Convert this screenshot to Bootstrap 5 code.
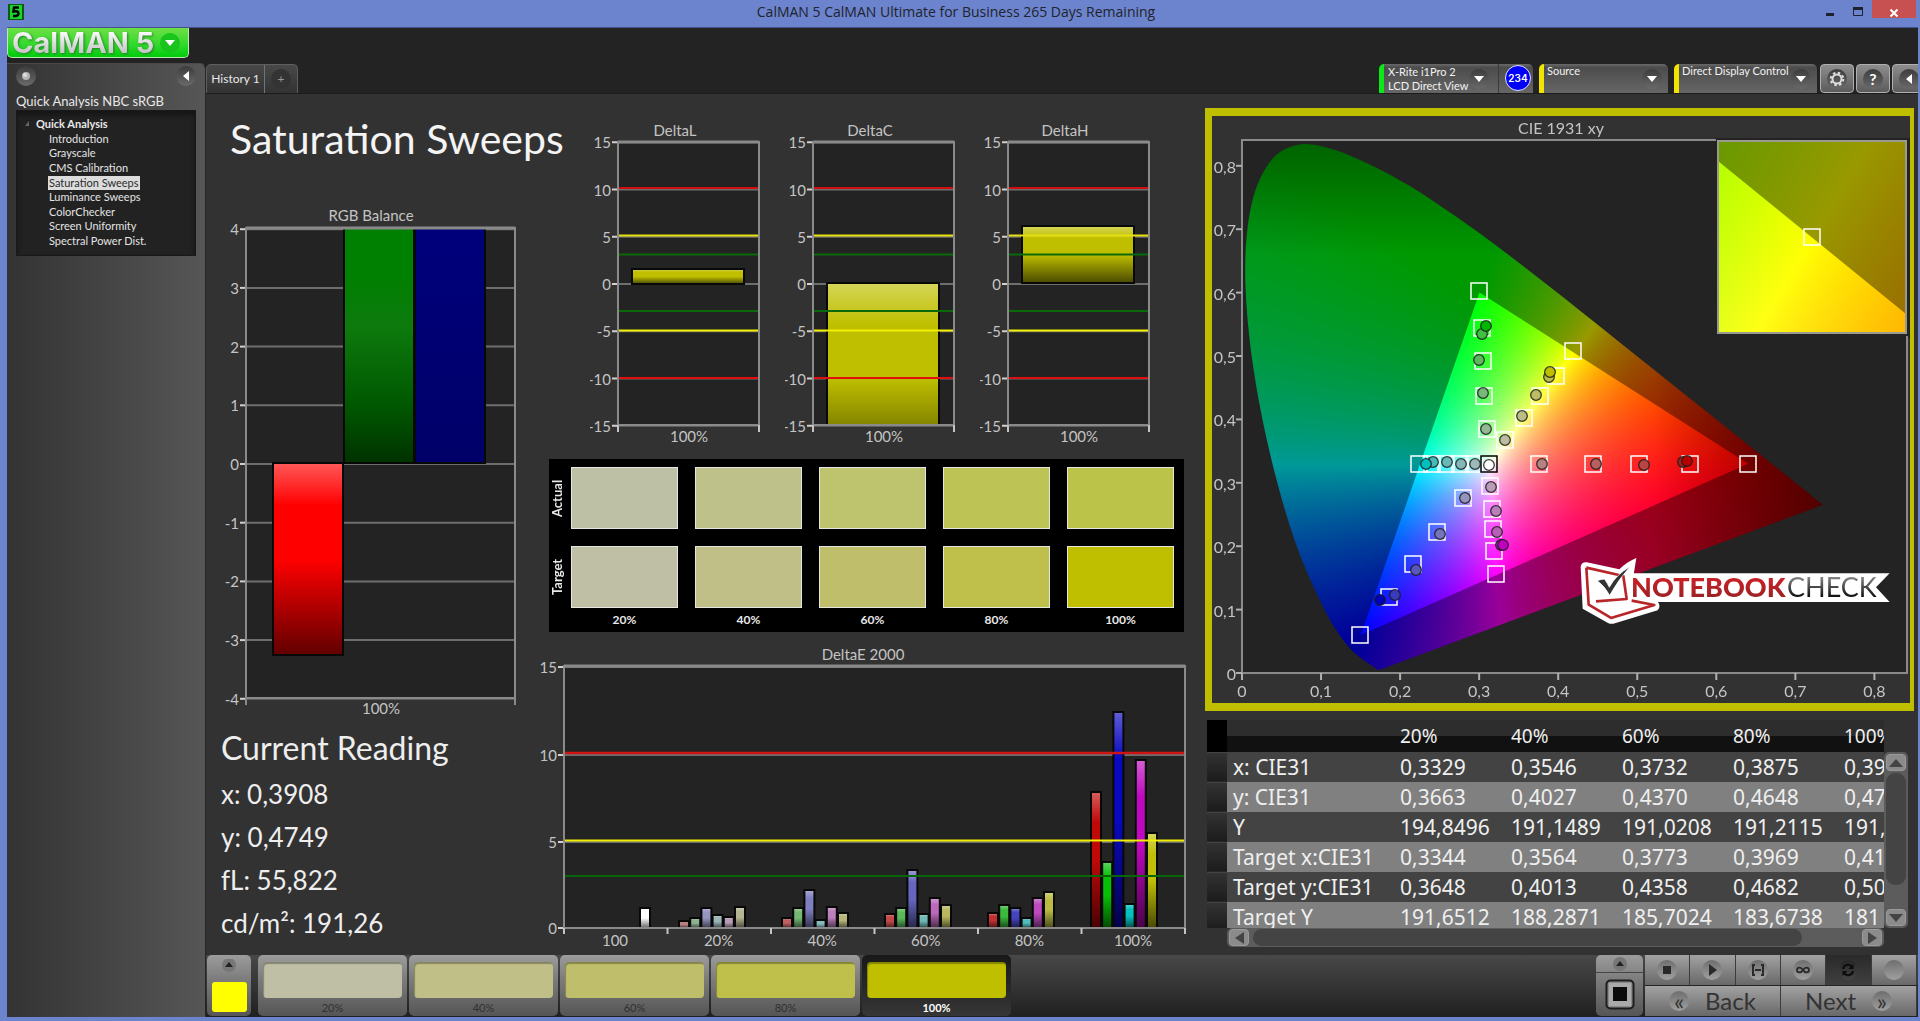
<!DOCTYPE html>
<html lang="en">
<head>
<meta charset="utf-8">
<meta name="viewport" content="width=device-width, initial-scale=1">
<title>CalMAN 5</title>
<link rel="stylesheet" href="https://cdn.jsdelivr.net/npm/bootstrap@5.3.0/dist/css/bootstrap.min.css">
<style>
:root{--blue:#6c83cd;--dark:#232323;--panel:#323232;--line:#8a8a8a}
body{background:var(--blue);color:#e8e8e8;font-family:Lato,"Open Sans",sans-serif;font-size:12px;line-height:14px;overflow:hidden}
button{font-family:inherit;color:inherit;border:0;padding:0;background:none}
svg text{font-family:Lato,"Open Sans",sans-serif}
.titlebar{height:27px;color:#20242c;font-family:"Open Sans",sans-serif;font-size:14px;line-height:24px}
.winbtn{width:28px;height:18px;color:#1d2130}
.closebtn{width:44px;height:18px;background:#c75050;color:#fff}
.app-shell{margin:0 2px 4px 7px;background:var(--dark);border-top:1px solid #42528c}
.topbar{height:65px}
.logo{width:182px;height:30px;background:linear-gradient(#6fdf45,#2fd82b 60%,#00cc0a);border:1px solid #b9e8b4;border-top:0;border-radius:0 0 5px 5px;overflow:hidden}
.logo-name{font-family:Inter,sans-serif;font-weight:700;font-size:29px;line-height:26px;background:linear-gradient(#fff,#bdbdbd);-webkit-background-clip:text;background-clip:text;color:transparent;filter:drop-shadow(1px 1px 1px #26802a)}
.side{width:199px;background:linear-gradient(90deg,#333,#565656);border-top:1px solid #4a4a4a;border-right:1px solid #262626;border-top-right-radius:6px;margin-top:-30px;padding:2px 9px 0}
.disc{width:20px;height:20px;border-radius:50%;background:linear-gradient(#3c3c3c,#6a6a6a);display:inline-flex;align-items:center;justify-content:center;flex:none}
.disc-green{background:#19c41d}
.disc-dark{background:#333;color:#999}
.flow-name{font-size:13px;line-height:18px;margin:6px 0 0}
.tree{background:#222;border:1px solid #191919;box-shadow:inset 0 4px 5px #151515;height:146px;padding:6px 0 0 8px;font-size:11px}
.tree ul{height:131px}
.tree a{color:#e4e4e4;text-decoration:none;line-height:14px;padding:0 1px;display:inline-block}
.tree a.current{background:#dcdcdc;color:#2b2b2b}
.tree li{padding-left:23px;line-height:14px}
.tree .branch{padding-left:0}
.tabs{border:1px solid #5e5e5e;border-bottom:0;border-radius:5px 5px 0 0;background:linear-gradient(#484848,#333);height:29px;margin-left:17px}
.tabs button{height:28px}
.tool{height:29px;background:linear-gradient(#6a6a6a,#4c4c4c 12%,#666);border-left:5px solid #f0e400;border-radius:5px 5px 0 0;color:#f2f2f2;position:relative;font-size:11px}
.tool select{appearance:none;background:none;border:0;color:inherit;font-size:11px;line-height:14px;width:100%;height:29px;padding:0 3px 15px;display:block}
.tool .disc{position:absolute;right:6px;top:5px;pointer-events:none}
.meter{border-left-color:#0bea16}
.meter .disc{right:44px}
.count{width:26px;height:26px;border-radius:50%;background:#0000f8;border:1px solid #dfe3ff;color:#fff;font:600 10px/24px Inter,sans-serif;text-align:center;margin:1px 2px 0 auto}
.sq{width:34px;height:29px;border:1px solid #b0b0b0;border-radius:4px;background:linear-gradient(#8d8d8d,#5c5c5c);display:inline-flex;align-items:center;justify-content:center}
.board{background:var(--panel);border-top:1px solid #1c1c1c}
.colL{flex:334 1 0;min-width:0}
.colM{flex:660 1 0;min-width:0}
.colR{flex:709 1 0;min-width:0;padding:14px 4px 0 5px}
.page-title{font-size:41px;line-height:48px;color:#f4f4f4;white-space:nowrap;padding:21px 0 0 24px;height:111px;margin:0;font-weight:400}
.chart{display:block;width:100%;height:auto}
.reading{padding:8px 0 0 15px;color:#eee}
.reading h2{font-size:32px;line-height:40px;margin:0 0 5px;font-weight:400}
.reading p{font-size:26px;line-height:43px;margin:0}
.delta-row{padding:21px 25px 0 50px}
.patches{background:#000;margin:9px 16px 8px 9px;padding:8px 10px 0 0;color:#e8e8e8;height:173px}
.patch-line{margin-bottom:17px}
.patch-line:last-child{margin-top:-13px}
.patch-row{display:grid;grid-template-columns:repeat(5,1fr);column-gap:17px}
.side-name{writing-mode:vertical-rl;transform:rotate(180deg);font-weight:700;font-size:13px;line-height:16px;text-align:center;width:16px;margin-right:6px;flex:none}
.patch{border:1px solid #e6e6e0;height:62px}
.cap{text-align:center;font-size:12px;font-weight:700;line-height:16px}
.cie{border:solid #bfbf00;border-width:8px 4px 8px 7px;position:relative}
.cie canvas{display:block;width:100%;height:auto}
.cie svg{position:absolute;inset:0;width:100%;height:100%}
.grid-wrap{margin:9px 6px 0 2px}
.grid-head{height:208px;overflow:hidden;min-width:0}
.readout{font-family:"Noto Sans",sans-serif;font-size:21px;table-layout:fixed;width:748px;border-collapse:collapse;color:#efefef;white-space:nowrap}
.readout th,.readout td{padding:0;font-weight:400;height:30px;line-height:30px;overflow:hidden;width:111px}
.readout tbody tr{background:#434343}
.readout tbody tr:nth-child(even){background:#808080}
.readout thead tr{background:linear-gradient(#2d2d2d 50%,#111 50%)}
.readout thead th{height:32px;font-size:19px}
.readout tr>:first-child{width:20px;background:linear-gradient(#333,#1b1b1b);border-bottom:1px solid #444}
.readout thead tr>:first-child{background:#000}
.readout tr>:nth-child(2){width:173px;padding-left:6px;text-align:left;box-sizing:border-box}
.vbar{width:24px;height:176px;margin-top:32px;background:#5c5c5c;border-radius:5px;padding:2px}
.vbar .thumb{height:112px;margin:2px 0 auto}
.vbar .arrowbtn{height:17px}
.hbar{height:19px;margin:0 24px 0 20px;background:#5c5c5c;border-radius:5px;padding:1px 2px}
.hbar .thumb{width:84%;margin:0 auto 0 4px}
.hbar .arrowbtn{width:20px}
.arrowbtn{background:#8b8b8b;border:1px solid #9a9a9a;border-radius:4px;display:flex;align-items:center;justify-content:center;flex:none}
.thumb{background:#444;border-radius:9px}
.bottombar{height:62px;background:linear-gradient(#484848,#202020);padding-right:1px}
.metal{background:linear-gradient(#9c9c9c,#7c7c7c 40%,#555);border-radius:5px}
.pick{width:44px;height:61px;margin:0 7px 0 1px}
.pick i{display:block;width:35px;height:30px;background:#ff0;border-radius:3px}
.level{width:149px;height:61px;padding:5px 5px 0;color:#303030;font-size:11px}
.level i{display:block;height:36px;border-radius:4px;margin-bottom:3px;box-shadow:inset 1px 2px 1px rgba(0,0,0,.3)}
.level.active{background:linear-gradient(#191919,#363636);color:#fff;font-weight:700}
.ctl{height:30px;border-right:1px solid #3c3c3c;background:linear-gradient(#a2a2a2,#686868);color:#2a2a2a}
.ctl .disc{background:linear-gradient(#6e6e6e,#a0a0a0)}
.ctl.on{background:linear-gradient(#2a2a2a,#404040)}
.ctl.on .disc{background:linear-gradient(#262626,#444)}
.nav-big{font-size:24px;line-height:30px;color:#333}
.transport{width:272px}
.stackbox{width:47px;height:61px}
.stackbox button:first-child{height:18px;border-bottom:1px solid #444}
.gap-thin{gap:2px}
</style>
<script src="https://cdn.jsdelivr.net/npm/bootstrap@5.3.0/dist/js/bootstrap.bundle.min.js"></script>
</head>
<body class="vh-100 d-flex flex-column">

<header class="titlebar d-flex align-items-start">
  <svg width="16" height="16" viewBox="0 0 16 16" class="ms-2 mt-1"><rect width="16" height="16" fill="#0a5a12"/><rect x="2" y="1" width="12" height="14" fill="#19d62a"/><path d="M11 3.5H6L5.500 7.500Q10.500 6.500 10.500 9.500T5 12" fill="none" stroke="#000" stroke-width="2.500"/></svg>
  <div class="flex-fill text-center ps-5 ms-4">CalMAN 5 CalMAN Ultimate for Business 265 Days Remaining</div>
  <button class="winbtn" aria-label="Minimize"><svg width="10" height="12" viewBox="0 0 10 12"><path d="M1 7.500h8" stroke="currentColor" stroke-width="3"/></svg></button>
  <button class="winbtn" aria-label="Maximize"><svg width="12" height="12" viewBox="0 0 12 12"><path d="M1.500 1v7.500h9V1" fill="none" stroke="currentColor"/><path d="M1 1.500h10" stroke="currentColor" stroke-width="3"/></svg></button>
  <button class="closebtn" aria-label="Close"><svg width="10" height="10" viewBox="0 0 10 10"><path d="M1.500 1.500l7 7m0-7l-7 7" stroke="currentColor" stroke-width="2"/></svg></button>
  <span class="ps-1"></span>
</header>

<div class="app-shell flex-fill d-flex flex-column">
  <div class="topbar d-flex align-items-start">
    <button class="logo d-flex align-items-center" aria-label="CalMAN menu">
      <span class="logo-name ps-1 flex-fill text-start text-nowrap">CalMAN 5</span>
      <span class="disc disc-green me-2"><svg width="10" height="6" viewBox="0 0 10 6"><path d="M0 0h10L5 6z" fill="#fff"/></svg></span>
    </button>
    <div class="tabs d-flex align-self-end">
      <button class="px-1" style="width:57px">History 1</button>
      <button class="border-start border-secondary" style="width:33px" aria-label="Add history"><span class="disc disc-dark">+</span></button>
    </div>
    <div class="ms-auto align-self-end d-flex align-items-end">
      <div class="tool meter d-flex" style="width:154px">
        <button class="text-start ps-1 text-nowrap" style="width:115px;border-right:1px solid #3a3a3a">X-Rite i1Pro 2<br>LCD Direct View</button>
        <span class="disc"><svg width="10" height="6" viewBox="0 0 10 6"><path d="M0 0h10L5 6z" fill="#fff"/></svg></span>
        <span class="count">234</span>
      </div>
      <div class="tool" style="width:129px;margin-left:6px">
        <select aria-label="Source"><option>Source</option></select>
        <span class="disc"><svg width="10" height="6" viewBox="0 0 10 6"><path d="M0 0h10L5 6z" fill="#fff"/></svg></span>
      </div>
      <div class="tool" style="width:143px;margin:0 3px 0 6px">
        <select aria-label="Display control"><option>Direct Display Control</option></select>
        <span class="disc"><svg width="10" height="6" viewBox="0 0 10 6"><path d="M0 0h10L5 6z" fill="#fff"/></svg></span>
      </div>
      <div class="d-flex overflow-hidden align-self-start gap-thin" style="width:98px">
        <button class="sq flex-shrink-0" aria-label="Settings"><span class="disc"><svg width="16" height="16" viewBox="-8 -8 16 16"><circle r="4.500" fill="none" stroke="#ddd" stroke-width="2"/><circle r="6.300" fill="none" stroke="#ddd" stroke-width="2" stroke-dasharray="2.500 2.448"/></svg></span></button>
        <button class="sq flex-shrink-0" aria-label="Help"><span class="disc fw-bold text-white fs-6">?</span></button>
        <button class="sq flex-shrink-0" aria-label="Collapse"><span class="disc"><svg width="6" height="10" viewBox="0 0 6 10"><path d="M6 0v10L0 5z" fill="#fff"/></svg></span></button>
      </div>
    </div>
  </div>

  <div class="d-flex flex-fill">
    <aside class="side flex-shrink-0">
      <div class="d-flex justify-content-between">
        <button class="disc" aria-label="Workflow options"><svg width="10" height="10" viewBox="0 0 10 10"><circle cx="5" cy="5" r="4" fill="#b5b5b5"/><circle cx="4" cy="4" r="2" fill="#ddd"/></svg></button>
        <button class="disc" aria-label="Collapse sidebar"><svg width="6" height="10" viewBox="0 0 6 10"><path d="M6 0v10L0 5z" fill="#fff"/></svg></button>
      </div>
      <div class="flow-name">Quick Analysis NBC sRGB</div>
      <nav class="tree">
        <ul class="list-unstyled m-0 d-flex flex-column justify-content-between">
          <li class="branch fw-bold d-flex align-items-center"><svg width="11" height="6" viewBox="0 0 11 6"><path d="M4 0v5H0z" fill="#666"/></svg>Quick Analysis</li>
          <li><a href="#">Introduction</a></li>
          <li><a href="#">Grayscale</a></li>
          <li><a href="#">CMS Calibration</a></li>
          <li><a href="#" class="current">Saturation Sweeps</a></li>
          <li><a href="#">Luminance Sweeps</a></li>
          <li><a href="#">ColorChecker</a></li>
          <li><a href="#">Screen Uniformity</a></li>
          <li><a href="#">Spectral Power Dist.</a></li>
        </ul>
      </nav>
    </aside>

    <div class="flex-fill d-flex flex-column" style="min-width:0">
      <main class="board flex-fill d-flex">
        <section class="colL">
          <h1 class="page-title">Saturation Sweeps</h1>
          <svg class="chart" id="rgb" viewBox="206 205 334 515"></svg>
          <div class="reading">
            <h2>Current Reading</h2>
            <p>x: 0,3908</p><p>y: 0,4749</p><p>fL: 55,822</p><p>cd/m²: 191,26</p>
          </div>
        </section>

        <section class="colM">
          <div class="delta-row d-flex">
            <svg class="chart" id="dL" viewBox="590 115 195 335"></svg>
            <svg class="chart" id="dC" viewBox="590 115 195 335"></svg>
            <svg class="chart" id="dH" viewBox="590 115 195 335"></svg>
          </div>
          <div class="patches" id="patches"></div>
          <svg class="chart" id="dE" viewBox="540 640 660 312"></svg>
        </section>

        <section class="colR">
          <div class="cie"><canvas id="gamut" width="698" height="587"></canvas><svg id="cie" viewBox="1212 116 698 587"></svg></div>
          <div class="grid-wrap">
            <div class="d-flex">
              <div class="grid-head flex-fill"><table class="readout" id="readout"></table></div>
              <div class="vbar d-flex flex-column flex-shrink-0">
                <button class="arrowbtn w-100" aria-label="Scroll up"><svg width="14" height="8" viewBox="0 0 14 8"><path d="M7 0l7 8H0z" fill="#444"/></svg></button>
                <div class="thumb"></div>
                <button class="arrowbtn w-100" aria-label="Scroll down"><svg width="14" height="8" viewBox="0 0 14 8"><path d="M7 8l7-8H0z" fill="#444"/></svg></button>
              </div>
            </div>
            <div class="hbar d-flex">
              <button class="arrowbtn" aria-label="Scroll left"><svg width="9" height="12" viewBox="0 0 9 12"><path d="M9 0v12L0 6z" fill="#444"/></svg></button>
              <div class="thumb"></div>
              <button class="arrowbtn" aria-label="Scroll right"><svg width="9" height="12" viewBox="0 0 9 12"><path d="M0 0v12l9-6z" fill="#444"/></svg></button>
            </div>
          </div>
        </section>
      </main>

      <footer class="bottombar d-flex align-items-start">
        <button class="metal pick d-flex flex-column align-items-center justify-content-between py-1" aria-label="Choose pattern colour">
          <svg width="16" height="14" viewBox="0 0 16 14"><circle cx="8" cy="6" r="7" fill="#777"/><path d="M8 3l4 5H4z" fill="#222"/></svg>
          <i></i>
        </button>
        <div class="d-flex gap-thin" id="levels"></div>
        <div class="ms-auto d-flex gap-thin">
          <div class="metal stackbox d-flex flex-column align-items-center">
            <button class="w-100" aria-label="More patterns"><svg class="d-block m-auto" width="16" height="14" viewBox="0 0 16 14"><circle cx="8" cy="7" r="7" fill="#777"/><path d="M8 4l4 5H4z" fill="#222"/></svg></button>
            <button class="m-auto" aria-label="Pattern window"><svg class="d-block" width="30" height="31" viewBox="0 0 30 31"><rect x="1.500" y="1.500" width="27" height="28" rx="4" fill="#8a8a8a" stroke="#1c1c1c" stroke-width="2"/><rect x="4" y="4" width="22" height="23" fill="#aaa"/><rect x="8" y="8" width="14" height="14" fill="#0c0c0c"/></svg></button>
          </div>
          <div class="transport">
            <div class="row g-0 row-cols-6" id="transport"></div>
            <div class="row g-0 row-cols-2 border-top border-dark">
              <button class="col ctl nav-big d-flex align-items-center justify-content-center"><span class="disc me-3">«</span>Back</button>
              <button class="col ctl nav-big d-flex align-items-center justify-content-center">Next<span class="disc ms-3">»</span></button>
            </div>
          </div>
        </div>
      </footer>
    </div>
  </div>
</div>

<script>
const $ = id => document.getElementById(id);
const LINE = '#8a8a8a', TXT = '#c4c4c4';
const line = (x1,y1,x2,y2,c,w) => `<line x1="${x1}" y1="${y1}" x2="${x2}" y2="${y2}" stroke="${c}" stroke-width="${w}"/>`;
const label = (x,y,t,a='middle',s=15) => `<text x="${x}" y="${y}" fill="${TXT}" font-size="${s}" text-anchor="${a}">${t}</text>`;
const shine = id => `<defs><linearGradient id="${id}" x1="0" y1="0" x2="0" y2="1"><stop offset="0" stop-color="#fff" stop-opacity=".35"/><stop offset=".22" stop-color="#fff" stop-opacity="0"/><stop offset=".5" stop-color="#000" stop-opacity="0"/><stop offset="1" stop-color="#000" stop-opacity=".62"/></linearGradient></defs>`;
const bar = (x,y,w,h,c,g) => `<rect x="${x}" y="${y}" width="${w}" height="${h}" fill="${c}"/><rect x="${x}" y="${y}" width="${w}" height="${h}" fill="url(#${g})" stroke="#080808" stroke-width="2"/>`;
function frame(x,y,w,h,grid){
  let s = `<rect x="${x}" y="${y}" width="${w}" height="${h}" fill="#232323"/>`;
  grid.forEach(([v,gy]) => s += line(x-6,gy,x,gy,'#d0d0d0',2) + line(x,gy,x+w,gy,'#6e6e6e',2) + label(x-7,gy+6,v,'end'));
  return s;
}
const border = (x,y,w,h) => `<rect x="${x}" y="${y}" width="${w}" height="${h}" fill="none" stroke="${LINE}" stroke-width="2"/>`+line(x,y,x+w,y,LINE,3);

/* RGB balance */
{
  const g = [4,3,2,1,0,-1,-2,-3,-4].map(v => [v, 464 - v*58.7]);
  $('rgb').innerHTML = shine('gr') + `<defs><linearGradient id="gg" x1="0" y1="0" x2="0" y2="1"><stop offset=".2" stop-color="#008000"/><stop offset=".42" stop-color="#0d7a0d"/><stop offset=".75" stop-color="#005800"/><stop offset="1" stop-color="#003200"/></linearGradient><linearGradient id="gb" x1="0" y1="0" x2="0" y2="1"><stop offset="0" stop-color="#00007c"/><stop offset="1" stop-color="#000068"/></linearGradient></defs>`
   + label(371,221,'RGB Balance') + frame(246,228,269,470,g)
   + bar(273,463,70,192,'#f00','gr') + `<rect x="344" y="228" width="70" height="235" fill="url(#gg)" stroke="#080808" stroke-width="2"/><rect x="415" y="228" width="70" height="235" fill="url(#gb)" stroke="#080808" stroke-width="2"/>`
   + border(246,228,269,470) + line(246,698,246,705,LINE,2) + line(515,698,515,705,LINE,2) + label(381,714,'100%');
}
/* DeltaL, DeltaC, DeltaH */
[['dL','DeltaL',269,15],['dC','DeltaC',283,190],['dH','DeltaH',226,57]].forEach(([id,name,y,h]) => {
  const g = [15,10,5,0,-5,-10,-15].map(v => [v, 284 - v*9.45]);
  let s = shine('g'+id) + `<defs><clipPath id="c${id}"><rect x="618" y="141" width="141" height="284"/></clipPath></defs>` + label(675,136,name) + frame(618,142,141,283,g)
   + `<g clip-path="url(#c${id})">${bar(632,y,112,h,'#bfbf00','g'+id)}</g>`;
  [[188,'#d01010'],[235.5,'#e8e010'],[254.5,'#0a6a0a'],[311,'#0a6a0a'],[330.5,'#f0f000'],[378,'#e01010']].forEach(([ly,c]) => s += line(618,ly,759,ly,c,2));
  $(id).innerHTML = s + border(618,142,141,283) + line(618,425,618,432,'#c4c4c4',2) + line(759,425,759,432,'#c4c4c4',2) + label(689,442,'100%');
});
/* Actual and target patches */
{
  const rows = {Actual:['#bdc0a5','#bec189','#bec36d','#bdc455','#bbc448'],Target:['#bfbfa5','#c0bf87','#bfbf6b','#bfc04b','#bfbf00']};
  const row = (n,cells) => `<div class="patch-line d-flex"><div class="side-name">${n}</div><div class="patch-row flex-fill">${cells}</div></div>`;
  $('patches').innerHTML = Object.entries(rows).map(([n,cs]) => row(n, cs.map(c => `<div class="patch" style="background:${c}"></div>`).join(''))).join('')
   + row('', [20,40,60,80,100].map(v => `<div class="cap">${v}%</div>`).join(''));
}
/* DeltaE 2000 */
{
  let s = shine('ge') + label(863,660,'DeltaE 2000') + frame(564,666,621,262,[[15,667],[10,755],[5,842],[0,928]]);
  const sets = [
   [640,[908],['#fff']],
   [679,[921,918,908,915,917,907],['#b98080','#8db391','#9595c0','#9bb5b8','#b79cb8','#b5b594']],
   [782,[918,908,890,920,907,913],['#c06060','#74b874','#7e7ec0','#86b8b8','#bb7fbb','#b5b57a']],
   [885,[914,908,870,914,898,905],['#c04a4a','#5aba5a','#6666c0','#70b8b8','#bb6abb','#b8b85f']],
   [988,[913,905,908,918,898,892],['#c03030','#3cba3c','#4444bf','#50bcbc','#bc4abc','#bbbb44']],
   [1091,[792,862,712,904,760,833],['#bf0808','#08bf08','#0808bf','#08bfbf','#bf08bf','#bfbf08']]];
  sets.forEach(([x,t,c]) => t.forEach((y,i) => s += bar(x+i*11.2,y,10,928-y,c[i],'ge')));
  s += line(564,753,1185,753,'#d01414',2.5) + line(564,840.5,1185,840.5,'#f0f000',2) + line(564,876,1185,876,'#0a640a',2) + border(564,666,621,262);
  for (let i=0;i<7;i++) s += line(564+i*103.5,928,564+i*103.5,934,'#c4c4c4',2);
  ['100','20%','40%','60%','80%','100%'].forEach((t,i) => s += label(615+i*103.6,946,t));
  $('dE').innerHTML = s;
}
/* Chromaticity colours: linear RGB, scaled so that the strongest channel is full */
const px = x => 1242.3 - 1212 + x*790.5, py = y => 673 - 116 - y*634;
function shade(x,y){
  y = Math.max(y,.0005);
  const X = x/y, Z = (1-x-y)/y;
  let r = 3.2406*X-1.5372-.4986*Z, g = -.9689*X+1.8758+.0415*Z, b = .0557*X-.204+1.057*Z;
  r = Math.max(r,0); g = Math.max(g,0); b = Math.max(b,0);
  const m = Math.max(r,g,b) || 1;
  let d = 1;
  if (x > .52) d = 1-(x-.52)*2.2;
  if (y > .66) d = 1-(y-.66)*2;
  return [r/m*255*d, g/m*255*d, b/m*255*d];
}
function fillImage(w,h,toXY){
  const c = document.createElement('canvas'); c.width = w; c.height = h;
  const k = c.getContext('2d'), im = k.createImageData(w,h);
  for (let j=0;j<h;j++) for (let i=0;i<w;i++){ const [x,y] = toXY(i,j), p = shade(x,y), o = (j*w+i)*4; im.data[o]=p[0]; im.data[o+1]=p[1]; im.data[o+2]=p[2]; im.data[o+3]=255; }
  k.putImageData(im,0,0); return c;
}
const locus = [[.1741,.005],[.1714,.0051],[.1644,.0109],[.1566,.0177],[.144,.0297],[.1355,.0399],[.1241,.0578],[.1096,.0868],[.0913,.1327],[.0687,.2007],[.0454,.295],[.0235,.4127],[.0082,.5384],[.0039,.6548],[.0139,.7502],[.0389,.812],[.0743,.8338],[.1142,.8262],[.1547,.8059],[.1929,.7816],[.2296,.7543],[.3016,.6923],[.3731,.6245],[.4441,.5547],[.5125,.4866],[.5752,.4242],[.627,.3725],[.6658,.334],[.6915,.3083],[.719,.2809],[.7347,.2653]].map(([x,y]) => [px(x),py(y)]);
{
  const g = fillImage(698,587,(i,j) => [(i-30.3)/790.5,(557-j)/634]), k = g.getContext('2d');
  const tri = [[.64,.33],[.3,.6],[.15,.06]];
  k.beginPath(); k.rect(0,0,698,587); tri.forEach(([x,y],i) => k[i?'lineTo':'moveTo'](px(x),py(y))); k.closePath();
  k.fillStyle = 'rgba(0,0,0,.4)'; k.fill('evenodd');
  k.globalCompositeOperation = 'destination-in'; k.fillStyle = '#000';
  k.beginPath(); k.moveTo(...locus[0]);
  for (let i=0;i<locus.length-1;i++){
    const a = locus[Math.max(i-1,0)], b = locus[i], c = locus[i+1], d = locus[Math.min(i+2,locus.length-1)];
    k.bezierCurveTo(b[0]+(c[0]-a[0])/6,b[1]+(c[1]-a[1])/6,c[0]-(d[0]-b[0])/6,c[1]-(d[1]-b[1])/6,c[0],c[1]);
  }
  k.closePath(); k.fill();
  const m = $('gamut').getContext('2d');
  m.fillStyle = '#323232'; m.fillRect(0,0,698,587);
  m.fillStyle = '#232323'; m.fillRect(30,24,665,533);
  m.drawImage(g,0,0);
  /* magnified view around the 100% yellow target */
  const z = fillImage(188,192,(i,j) => [.4193+(i-94)*.05/188,.505-(j-97)*.05/192]), q = z.getContext('2d');
  q.beginPath(); q.moveTo(0,20); q.lineTo(188,173); q.lineTo(188,0); q.lineTo(0,0); q.fillStyle = 'rgba(0,0,0,.4)'; q.fill();
  m.fillStyle = '#232323'; m.fillRect(503,22,195,200);
  m.drawImage(z,506,25);
}
{
  let s = label(1561,134,'CIE 1931 xy','middle',16)
   + `<path d="M1716 140H1242V673H1907V336" fill="none" stroke="${LINE}" stroke-width="2"/><rect x="1718" y="141" width="188" height="192" fill="none" stroke="#9a9a90" stroke-width="2"/>`;
  for (let i=0;i<9;i++){
    const t = i ? '0,'+i : '0', x = 1242+i*79.05, y = 673-i*63.4;
    s += line(x,673,x,680,'#b0b0b0',2) + line(1236,y,1242,y,'#b0b0b0',2) + label(x,697,t,'middle',16) + label(1236,y+7,t,'end',16);
  }
  const sq = (x,y,c='#fff') => `<rect x="${x-8}" y="${y-8}" width="16" height="16" fill="none" stroke="${c}" stroke-width="1.5"/>`;
  [[1479,291],[1482,328],[1483,361],[1484,396],[1487,429],[1573,351],[1556,376],[1540,396],[1524,418],[1505,440],[1539,464],[1593,464],[1639,464],[1690,464],[1748,464],[1419,464],[1432,464],[1446,464],[1460,464],[1474,464],[1490,486],[1492,509],[1493,529],[1494,551],[1496,574],[1463,498],[1437,532],[1413,564],[1389,597],[1360,635],[1812,237]].forEach(p => s += sq(...p));
  s += sq(1489,464,'#000');
  [[1482,334,'#40bf40'],[1486,326,'#00b800'],[1479,360,'#5cb85c'],[1483,393,'#78b878'],[1486,429,'#94b894'],
   [1549,377,'#bdbd4a'],[1550,372,'#bfbf00'],[1536,395,'#bdbd68'],[1522,416,'#bcbc85'],[1505,440,'#bcbca2'],
   [1542,464,'#b88080'],[1596,464,'#b86060'],[1644,465,'#b84444'],[1683,462,'#a02020'],[1687,461,'#b80000'],
   [1433,462,'#46b8b8'],[1426,464,'#00bfbf'],[1447,462,'#68b8b8'],[1461,464,'#84b8b8'],[1475,464,'#9cb8b8'],
   [1491,487,'#b89cb8'],[1496,511,'#b87fb8'],[1497,532,'#b860b8'],[1501,545,'#b030b0'],[1503,545,'#c000c0'],
   [1465,498,'#9494bc'],[1440,534,'#7474bc'],[1416,570,'#5858bc'],[1395,595,'#3a3abc'],[1380,600,'#0000b8'],[1489,465,'#fff']]
   .forEach(([x,y,c]) => s += `<circle cx="${x}" cy="${y}" r="5.3" fill="${c}" stroke="#1c1c1c" stroke-opacity=".85" stroke-width="1.3"/>`);
  /* sponsor badge */
  s += `<defs><linearGradient id="ck" x1="0" y1="0" x2="0" y2="1"><stop offset=".2" stop-color="#888"/><stop offset=".8" stop-color="#111"/></linearGradient><linearGradient id="nb" x1="0" y1="0" x2="0" y2="1"><stop offset=".2" stop-color="#cf2026"/><stop offset=".8" stop-color="#9e2225"/></linearGradient></defs>
  <g transform="translate(1560 300) scale(.3333)">
   <path d="M150 820H989L948 862L989 906H150Z" fill="#fff"/>
   <path d="M62 800Q64 786 80 787L178 808Q200 786 229 774L220 830V900L290 903Q306 915 293 931L160 971Q152 973 144 969L68 926Z" fill="#fff"/>
   <path d="M79 803L190 828L200 897L108 904M79 803L86 914L153 954L283 915L215 902" fill="none" stroke="#b8262a" stroke-width="8" stroke-linejoin="round"/>
   <path d="M112 842Q128 836 134 838Q142 850 148 862Q168 824 210 800Q174 840 149 886Q134 858 112 842Z" fill="#333" stroke="#fff" stroke-width="2"/>
  </g>
  <text x="1631" y="597" font-size="27" font-weight="900" fill="url(#nb)">NOTEBOOK</text><text x="1787" y="597" font-size="27" fill="url(#ck)">CHECK</text>`;
  $('cie').innerHTML = s;
}
/* Readings table */
{
  const rows = [['x: CIE31','0,3329','0,3546','0,3732','0,3875','0,3908'],['y: CIE31','0,3663','0,4027','0,4370','0,4648','0,4749'],['Y','194,8496','191,1489','191,0208','191,2115','191,26'],['Target x:CIE31','0,3344','0,3564','0,3773','0,3969','0,4193'],['Target y:CIE31','0,3648','0,4013','0,4358','0,4682','0,5053'],['Target Y','191,6512','188,2871','185,7024','183,6738','181']];
  $('readout').innerHTML = '<thead><tr><th></th><th></th>' + [20,40,60,80,100].map(v => `<th>${v}%</th>`).join('') + '</tr></thead><tbody>'
   + rows.map(r => '<tr><td></td>' + r.map(c => `<td>${c}</td>`).join('') + '</tr>').join('') + '</tbody>';
}
/* Saturation levels and transport */
$('levels').innerHTML = [['20%','#bfbfa5'],['40%','#c0bf87'],['60%','#bfbf6b'],['80%','#bfc04b'],['100%','#bfbf00']].map(([t,c],i) => `<button class="metal level${i==4?' active':''}"><i style="background:${c}"></i>${t}</button>`).join('');
$('transport').innerHTML = [
 ['Stop','<rect x="4" y="4" width="8" height="8" fill="#2a2a2a"/>'],
 ['Play','<path d="M5 2l8 6-8 6z" fill="#2a2a2a"/>'],
 ['Read series','<path d="M5 3H3v10h2M11 3h2v10h-2M5 8h6" fill="none" stroke="#2a2a2a" stroke-width="2" stroke-dasharray="20"/>'],
 ['Continuous','<path d="M8 8C6 4.500 2 5 2 8s4 3.500 6 0c2-3.500 6-3 6 0s-4 3.500-6 0z" fill="none" stroke="#2a2a2a" stroke-width="1.800"/>'],
 ['Refresh','<path d="M3 7a5 5 0 0 1 9-2M13 9a5 5 0 0 1-9 2" fill="none" stroke="#0c0c0c" stroke-width="2"/><path d="M13.500 2v5h-5zM2.500 14V9h5z" fill="#0c0c0c"/>'],
 ['Idle','']].map(([n,p],i) => `<button class="col ctl${i==4?' on':''}" aria-label="${n}"><span class="disc align-middle"><svg width="16" height="16" viewBox="0 0 16 16">${p}</svg></span></button>`).join('');
</script>
</body>
</html>
